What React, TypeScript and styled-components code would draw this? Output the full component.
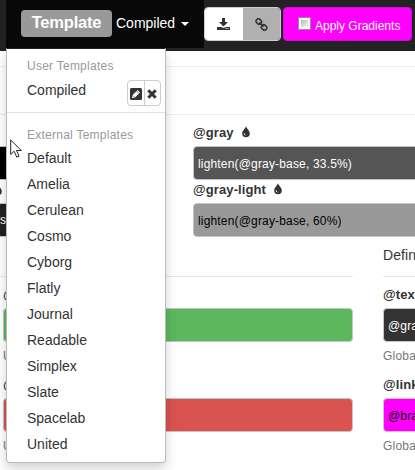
import React from 'react';
import styled, { createGlobalStyle } from 'styled-components';

const GlobalStyle = createGlobalStyle`
  * { box-sizing: border-box; }
  html, body { margin: 0; width: 415px; height: 470px; overflow: hidden; background: #fff; }
  body { font: 14px/20px "Liberation Sans", Arial, sans-serif; color: #333; }
  svg { display: block; }
`;

const Page = styled.div`
  position: relative;
  width: 415px;
  height: 470px;
  overflow: hidden;
`;

const Navbar = styled.nav`
  display: flex;
  align-items: flex-start;
  height: 51px;
  padding-left: 6px;
  background: #222;
`;

const DropdownToggle = styled.div`
  display: flex;
  flex: none;
  align-items: flex-start;
  width: 198px;
  height: 48px;
  padding: 10px 0 0 15px;
  background: #080808;
  color: #fff;
`;

const TemplateLabel = styled.span`
  width: 91px;
  height: 27px;
  padding-top: 2px;
  border-radius: 4px;
  background: #999;
  font-size: 16.5px;
  font-weight: bold;
  line-height: 20px;
  text-align: center;
  letter-spacing: -0.2px;
`;

const Current = styled.span`
  margin: 3px 6px 0 4px;
  white-space: nowrap;
`;

const Caret = styled.i`
  margin-top: 12px;
  border: 4px solid transparent;
  border-top-color: #fff;
  border-bottom: 0;
`;

const ButtonGroup = styled.div`
  display: flex;
  flex: none;
  width: 77px;
  height: 34px;
  margin-top: 7px;
  border: 1px solid #ccc;
  border-radius: 4px;
  overflow: hidden;
`;

const ToolButton = styled.span<{ $muted?: boolean }>`
  display: flex;
  flex: 1;
  align-items: center;
  justify-content: center;
  background: ${p => (p.$muted ? '#b0b0b0' : '#fff')};
`;

const GradientButton = styled.div`
  display: flex;
  flex: none;
  width: 129px;
  height: 34px;
  margin: 7px 0 0 2px;
  padding: 9px 0 0 14px;
  border: 1px solid #e600e6;
  border-radius: 4px;
  background: #f0f;
  color: #fff;
  font-size: 12px;
  line-height: 19px;
  white-space: nowrap;
`;

const Checkbox = styled.i`
  flex: none;
  width: 13px;
  height: 13px;
  margin-right: 4px;
  border: 1px solid #8e8f8f;
  background: linear-gradient(135deg, #b4bac0, #f4f4f4) content-box, #f4f4f4;
  padding: 2px;
`;

const Rule = styled.div<{ $top: number }>`
  height: 1px;
  margin-top: ${p => p.$top}px;
  background: #eee;
`;

const GrayRow = styled.section`
  display: grid;
  grid-template-columns: 7px 222px;
  column-gap: 186px;
  height: 129px;
  padding-top: 8px;
`;

const Stack = styled.div`
  overflow: hidden;
  min-width: 0;
`;

const Name = styled.div`
  display: flex;
  height: 20px;
  gap: 8px;
  align-items: center;
  font-size: 13px;
  font-weight: bold;
  line-height: 20px;
  white-space: nowrap;
  letter-spacing: 0.1px;
  svg { margin-top: -2px; }
`;

const Swatch = styled.div<{ $color: string; $ink?: string }>`
  width: 350px;
  height: 34px;
  margin-top: 3px;
  padding: 7px 4px;
  border: 1px solid #c4c4c4;
  border-radius: 4px;
  background: ${p => p.$color};
  color: ${p => p.$ink ?? '#fff'};
  font-size: 12px;
  line-height: 20px;
  letter-spacing: 0.17px;
  white-space: nowrap;
  overflow: hidden;
`;

const ClippedGrays = styled(Stack)`
  display: flex;
  flex-direction: column;
  padding-top: 23px;
`;

const EdgeSwatch = styled.div<{ $color: string }>`
  flex: none;
  width: 7px;
  height: 34px;
  padding-top: 7px;
  border: solid #c4c4c4;
  border-width: 1px 0;
  background: ${p => p.$color};
  color: #fff;
  font-size: 12px;
  line-height: 19px;
`;

const EdgeDrop = styled.div`
  height: 23px;
  padding: 4px 0 0;
  svg { margin-left: -6px; }
`;

const Columns = styled.section`
  display: grid;
  grid-template-columns: 350px 100px;
  column-gap: 30px;
  padding-left: 3px;
`;

const Column = styled.div`
  min-width: 0;
`;

const Intro = styled.div`
  height: 32px;
  padding-top: 1px;
  white-space: nowrap;
  letter-spacing: 0.1px;
`;

const Divider = styled.div<{ $bleed?: boolean }>`
  height: 1px;
  margin: 0 0 8px ${p => (p.$bleed ? '-3px' : '0')};
  background: #e8e8e8;
`;

const Field = styled.div`
  height: 90px;
`;

const Help = styled.div`
  padding-top: 4px;
  color: #777;
  font-size: 12px;
  line-height: 20px;
  letter-spacing: 0.2px;
  white-space: nowrap;
`;

const Menu = styled.div`
  position: absolute;
  top: 48px;
  left: 6px;
  width: 160px;
  height: 415px;
  padding: 6px 0;
  border: 1px solid #bbb;
  border-top-color: #222;
  border-radius: 0 0 4px 4px;
  background: #fff;
  box-shadow: 0 6px 12px rgba(0, 0, 0, .175);
`;

const MenuHeader = styled.div`
  height: 21px;
  padding: 2px 20px 0;
  color: #999;
  font-size: 12px;
  line-height: 18px;
  letter-spacing: 0.25px;
  white-space: nowrap;
`;

const MenuItem = styled.div`
  height: 26px;
  padding: 3px 20px;
`;

const UserItem = styled.div`
  display: flex;
  justify-content: space-between;
  height: 36px;
  padding: 4px 4px 0 20px;
`;

const MenuDivider = styled.div`
  height: 1px;
  margin-bottom: 11px;
  background: #e0e0e0;
`;

const MiniGroup = styled.div`
  display: flex;
  width: 34px;
  height: 26px;
  border: 1px solid #ccc;
  border-radius: 4px;
`;

const MiniButton = styled.span`
  display: flex;
  flex: 1;
  align-items: center;
  justify-content: center;
  padding-top: 2px;
  & + & { border-left: 1px solid #ccc; }
`;

const Pointer = styled.svg`
  position: absolute;
  top: 139px;
  left: 10px;
`;

const Drop = () => (
  <svg width="8" height="12" viewBox="0 0 8 12">
    <path d="M4 0C3.6 2.6.2 4.4.2 7.4a3.8 3.8 0 0 0 7.6 0C7.8 4.4 4.4 2.6 4 0Z" fill="#333" />
    <path d="M2.2 7.2c0 1.2.5 1.7 1.3 2" fill="none" stroke="#fff" strokeWidth="1" />
  </svg>
);

const DownloadIcon = () => (
  <svg width="13" height="13" viewBox="0 0 13 13">
    <path d="M5 0h3v4h3L6.5 8.5 2 4h3ZM0 9h4l2.5 1L9 9h4v3H0Z" fill="#333" />
    <path d="M8.5 10.5h1M10.5 10.5h1" stroke="#fff" />
  </svg>
);

const LinkIcon = () => (
  <svg width="13" height="13" viewBox="0 0 13 13">
    <g fill="none" stroke="#333" strokeWidth="1.5">
      <rect x="1" y="1.2" width="5.6" height="4.6" rx="2.1" transform="rotate(45 3.8 3.5)" />
      <rect x="6.3" y="7.2" width="5.6" height="4.6" rx="2.1" transform="rotate(45 9.1 9.5)" />
      <path d="m4.4 4.4 4.2 4.2" />
    </g>
  </svg>
);

const EditIcon = () => (
  <svg width="12" height="12" viewBox="0 0 12 12">
    <rect width="12" height="12" rx="1.5" fill="#333" />
    <path d="m2 10 .6-3 5-5 2.4 2.4-5 5Z" fill="#fff" />
    <path d="m3 7.6 1.4 1.4M6.6 3l2.3 2.3" stroke="#333" strokeWidth=".6" />
  </svg>
);

const CloseIcon = () => (
  <svg width="10" height="10" viewBox="0 0 10 10">
    <path d="m1.3 1.3 7.4 7.4m0-7.4L1.3 8.7" stroke="#333" strokeWidth="3" />
  </svg>
);

const templates = ['Default', 'Amelia', 'Cerulean', 'Cosmo', 'Cyborg', 'Flatly', 'Journal', 'Readable', 'Simplex', 'Slate', 'Spacelab', 'United'];

const brandFields = [
  { name: '@', color: '#5cb85c', help: 'U' },
  { name: '@', color: '#d9534f', help: 'U' },
];

const globalFields = [
  { name: '@text-color', value: '@gray-dark', color: '#333', ink: '#fff', help: 'Global text color' },
  { name: '@link-color', value: '@brand-primary', color: '#f0f', ink: '#000', help: 'Global link color' },
];

export default function App() {
  return (
    <>
      <GlobalStyle />
      <Page>
        <Navbar>
          <DropdownToggle>
            <TemplateLabel>Template</TemplateLabel>
            <Current>Compiled</Current>
            <Caret />
          </DropdownToggle>
          <ButtonGroup>
            <ToolButton><DownloadIcon /></ToolButton>
            <ToolButton $muted><LinkIcon /></ToolButton>
          </ButtonGroup>
          <GradientButton><Checkbox />Apply Gradients</GradientButton>
        </Navbar>
        <Rule $top={15} />
        <Rule $top={47} />
        <GrayRow>
          <ClippedGrays>
            <EdgeSwatch $color="#000" />
            <EdgeDrop><Drop /></EdgeDrop>
            <EdgeSwatch $color="#222">s</EdgeSwatch>
          </ClippedGrays>
          <Stack>
            <Name>@gray <Drop /></Name>
            <Swatch $color="#555">lighten(@gray-base, 33.5%)</Swatch>
            <Name>@gray-light <Drop /></Name>
            <Swatch $color="#999" $ink="#000">lighten(@gray-base, 60%)</Swatch>
          </Stack>
        </GrayRow>
        <Columns>
          <Column>
            <Intro />
            <Divider $bleed />
            {brandFields.map(f => (
              <Field key={f.color}>
                <Name>{f.name}</Name>
                <Swatch $color={f.color} />
                <Help>{f.help}</Help>
              </Field>
            ))}
          </Column>
          <Column>
            <Intro>Defines</Intro>
            <Divider />
            {globalFields.map(f => (
              <Field key={f.name}>
                <Name>{f.name}</Name>
                <Swatch $color={f.color} $ink={f.ink}>{f.value}</Swatch>
                <Help>{f.help}</Help>
              </Field>
            ))}
            <Name>@link-hover-color</Name>
          </Column>
        </Columns>
        <Menu>
          <MenuHeader>User Templates</MenuHeader>
          <UserItem>
            Compiled
            <MiniGroup>
              <MiniButton><EditIcon /></MiniButton>
              <MiniButton><CloseIcon /></MiniButton>
            </MiniGroup>
          </UserItem>
          <MenuDivider />
          <MenuHeader>External Templates</MenuHeader>
          {templates.map(t => <MenuItem key={t}>{t}</MenuItem>)}
        </Menu>
        <Pointer width="13" height="20" viewBox="0 0 13 20">
          <path d="M.7 1v14.5l3.4-3.3 2.7 6 2.3-1-2.6-5.7h4.8Z" fill="#fff" stroke="#223" />
        </Pointer>
      </Page>
    </>
  );
}
